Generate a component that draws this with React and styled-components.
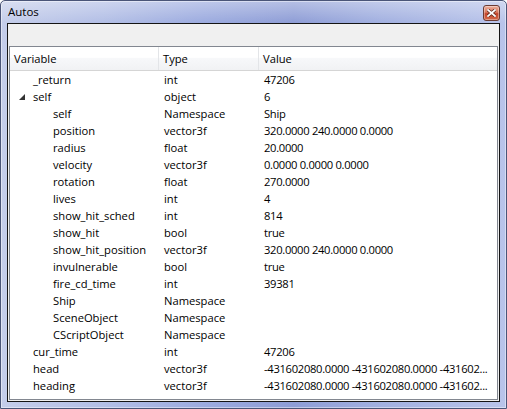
import React from 'react';
import styled, { createGlobalStyle } from 'styled-components';

const GlobalStyle = createGlobalStyle`
    html, body {
        margin:0;
        padding:0;
        background:#ffffff;
    }
    body{
        font-family:'Open Sans', 'Noto Sans', sans-serif;
    }
`

const rows = [
    { name: '_return', type: 'int', value: '47206', depth: 0 },
    { name: 'self', type: 'object', value: '6', depth: 0, open: true },
    { name: 'self', type: 'Namespace', value: 'Ship', depth: 1 },
    { name: 'position', type: 'vector3f', value: '320.0000 240.0000 0.0000', depth: 1 },
    { name: 'radius', type: 'float', value: '20.0000', depth: 1 },
    { name: 'velocity', type: 'vector3f', value: '0.0000 0.0000 0.0000', depth: 1 },
    { name: 'rotation', type: 'float', value: '270.0000', depth: 1 },
    { name: 'lives', type: 'int', value: '4', depth: 1 },
    { name: 'show_hit_sched', type: 'int', value: '814', depth: 1 },
    { name: 'show_hit', type: 'bool', value: 'true', depth: 1 },
    { name: 'show_hit_position', type: 'vector3f', value: '320.0000 240.0000 0.0000', depth: 1 },
    { name: 'invulnerable', type: 'bool', value: 'true', depth: 1 },
    { name: 'fire_cd_time', type: 'int', value: '39381', depth: 1 },
    { name: 'Ship', type: 'Namespace', value: '', depth: 1 },
    { name: 'SceneObject', type: 'Namespace', value: '', depth: 1 },
    { name: 'CScriptObject', type: 'Namespace', value: '', depth: 1 },
    { name: 'cur_time', type: 'int', value: '47206', depth: 0 },
    { name: 'head', type: 'vector3f', value: '-431602080.0000 -431602080.0000 -431602...', depth: 0 },
    { name: 'heading', type: 'vector3f', value: '-431602080.0000 -431602080.0000 -431602...', depth: 0 },
];

const App = () => {
    return (
        <>
            <GlobalStyle />
            <Window>
                <TitleBar>
                    <Title>Autos</Title>
                    <CloseButton>
                        <svg width="9" height="8" viewBox="0 0 9 8">
                            <path d="M1 1 L8 7 M8 1 L1 7" stroke="#5a2418" strokeWidth="3.2" strokeLinecap="square" />
                            <path d="M1 1 L8 7 M8 1 L1 7" stroke="#ffffff" strokeWidth="1.8" strokeLinecap="square" />
                        </svg>
                    </CloseButton>
                </TitleBar>
                <Client>
                    <Toolbar />
                    <ListView>
                        <HeaderRow>
                            <HeaderCell width={149}>Variable</HeaderCell>
                            <HeaderCell width={100}>Type</HeaderCell>
                            <HeaderCell last>Value</HeaderCell>
                        </HeaderRow>
                        {rows.map((r, i) => (
                            <Row key={i}>
                                <Cell width={149}>
                                    <Indent depth={r.depth}>
                                        {r.open && (
                                            <Expander>
                                                <svg width="6" height="6" viewBox="0 0 6 6">
                                                    <polygon points="6,0 6,6 0,6" fill="#333333" />
                                                </svg>
                                            </Expander>
                                        )}
                                    </Indent>
                                    {r.name}
                                </Cell>
                                <Cell width={100}>{r.type}</Cell>
                                <Cell numeric>{r.value}</Cell>
                            </Row>
                        ))}
                    </ListView>
                </Client>
            </Window>
        </>
    )
}

const Window = styled.div`
    box-sizing:border-box;
    width:507px;
    height:409px;
    display:flex;
    flex-direction:column;
    border:1px solid #4a5578;
    border-radius:5px 5px 0 0;
    padding:0 6px 6px 6px;
    background:
        linear-gradient(180deg, rgba(255,255,255,0.35) 0px, rgba(255,255,255,0) 22px),
        linear-gradient(90deg, #c4cdea 0%, #b3bfe6 20%, #9cabdf 40%, #8e9dd6 58%, #a2b0e0 75%, #b9c4ea 100%);
    box-shadow: inset 0 0 0 1px rgba(255,255,255,0.45);
`

const TitleBar = styled.div`
    height:22px;
    display:flex;
    align-items:center;
    justify-content:space-between;
    padding:0 0 0 1px;
`

const Title = styled.span`
    font-size:11.5px;
    color:#000;
    margin-top:-1px;
`

const CloseButton = styled.div`
    box-sizing:border-box;
    width:17px;
    height:16px;
    margin-top:2px;
    display:flex;
    align-items:center;
    justify-content:center;
    border:1px solid #6b3b33;
    border-radius:3px;
    background:linear-gradient(180deg, #eeb19f 0%, #d9765b 45%, #c2432a 55%, #d36a4a 100%);
    box-shadow: inset 0 0 0 1px rgba(255,255,255,0.35);
`

const Client = styled.div`
    flex:1;
    display:flex;
    flex-direction:column;
    border:1px solid #141414;
    background:#f0f0f0;
    min-height:0;
`

const Toolbar = styled.div`
    height:22px;
    flex:none;
`

const ListView = styled.div`
    flex:1;
    margin:0 1px 1px 1px;
    border:1px solid #828790;
    background:#ffffff;
    overflow:hidden;
    font-size:11.2px;
    color:#000;
`

const HeaderRow = styled.div`
    display:flex;
    height:23px;
    border-bottom:1px solid #d5d5d5;
    background:linear-gradient(180deg, #ffffff 0%, #ffffff 45%, #f7f8fa 50%, #f1f2f4 100%);
`

const HeaderCell = styled.div`
    box-sizing:border-box;
    ${p => p.width ? `width:${p.width}px; flex:none;` : 'flex:1;'}
    display:flex;
    align-items:center;
    padding-left:4px;
    padding-bottom:1px;
    border-right:${p => p.last ? 'none' : '1px solid #e3e5e8'};
    color:#000;
`

const Row = styled.div`
    box-sizing:border-box;
    display:flex;
    height:17px;
    padding-bottom:1px;
    align-items:center;
`

const Cell = styled.div`
    box-sizing:border-box;
    ${p => p.width ? `width:${p.width}px; flex:none;` : 'flex:1;'}
    display:flex;
    align-items:center;
    padding-left:5px;
    white-space:nowrap;
    overflow:hidden;
    letter-spacing:${p => p.numeric ? '-0.3px' : 'normal'};
`

const Indent = styled.span`
    display:inline-flex;
    align-items:center;
    width:${p => 18 + p.depth * 20}px;
    flex:none;
`

const Expander = styled.span`
    display:inline-flex;
    margin-left:4px;
    margin-top:2px;
`

export default App;
